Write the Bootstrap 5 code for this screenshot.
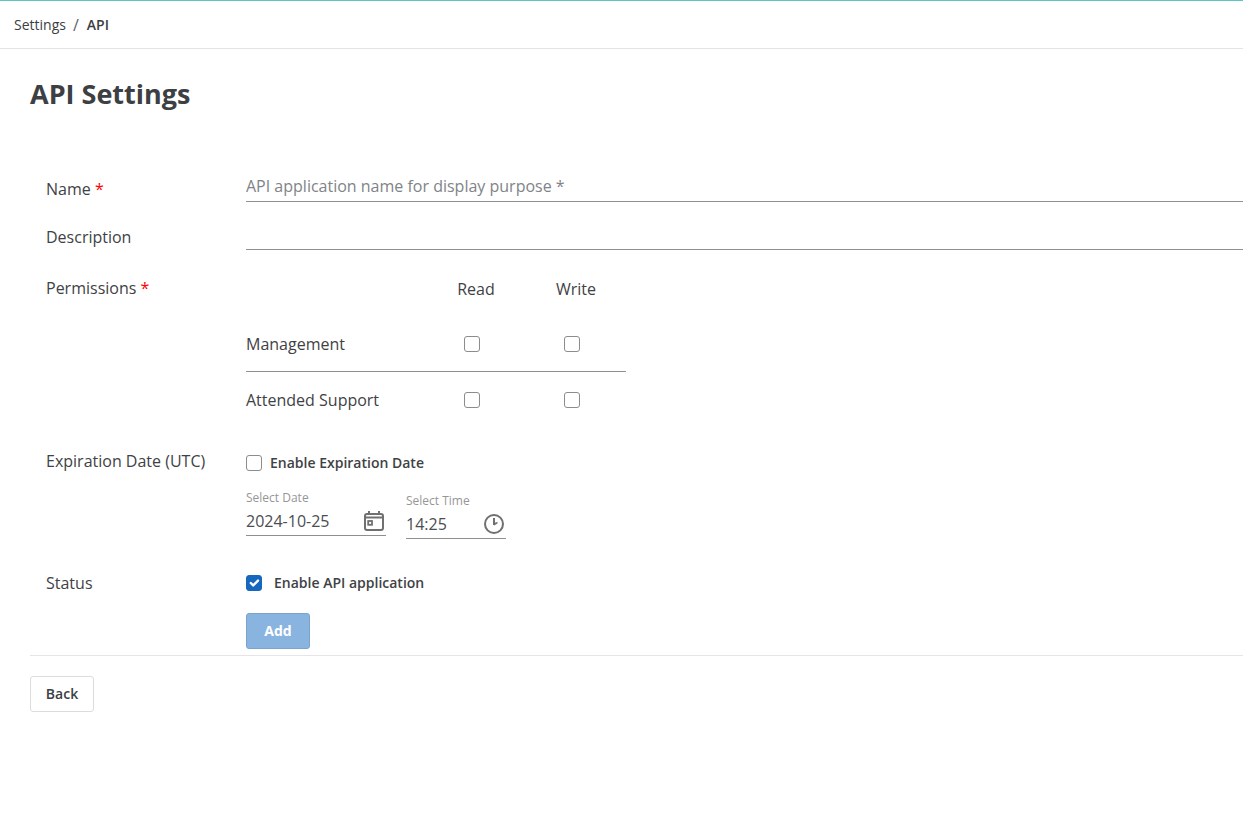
<!DOCTYPE html>
<html lang="en">
<head>
<meta charset="utf-8">
<meta name="viewport" content="width=device-width, initial-scale=1">
<title>API Settings</title>
<link href="https://cdn.jsdelivr.net/npm/bootstrap@5.3.0/dist/css/bootstrap.min.css" rel="stylesheet">
<script src="https://cdn.jsdelivr.net/npm/bootstrap@5.3.0/dist/js/bootstrap.bundle.min.js" defer></script>
<style>
  body { font-family: "Open Sans", sans-serif; font-size: 16px; line-height: 24px; color: #3f4245; }
  .topbar { height: 49px; padding: 0 14px; border-top: 1px solid #5bc4c4; border-bottom: 1px solid #e2e5e8; font-size: 14px; }
  .topbar a, .topbar .active { color: #3c4043; }
  .topbar .breadcrumb-item + .breadcrumb-item { padding-left: 7px; }
  .topbar .breadcrumb-item + .breadcrumb-item::before { color: #5f6368; font-size: 16px; font-weight: 400; padding-right: 8px; }
  .page-body { padding: 25px 0 0 30px; }
  .page-title { font-size: 27px; line-height: 40px; font-weight: 700; color: #3c4043; }
  .settings-form { padding: 40px 0 6px 16px; border-bottom: 1px solid #e5e5e5; }
  .form-line { display: grid; grid-template-columns: 200px minmax(0, 1fr); }
  .text-line { height: 48px; align-items: end; }
  .text-line label { padding-bottom: 1px; }
  .underlined { border: 0; border-bottom: 1px solid #8f8f8f; border-radius: 0; padding: 0; color: #3c4043; background: transparent; box-shadow: none; font-size: 16px; line-height: 24px; }
  .text-line .underlined { height: 32px; }
  .underlined::placeholder { color: #808488; font-weight: 400; }
  .required { color: #f00; }
  .perm-label { padding-top: 26px; }
  .permissions { width: 380px; table-layout: fixed; margin: 10px 0 0; border-collapse: separate; border-spacing: 0; }
  .permissions th { font-weight: 400; }
  .permissions th, .permissions td { height: 56px; padding: 0; vertical-align: middle; }
  .permissions thead th { padding-top: 2px; }
  .permissions .access { width: 100px; text-align: center; }
  .permissions .divided > * { border-bottom: 1px solid #8f8f8f; }
  .permissions .form-check-input { display: block; margin: 0 auto; position: static; float: none; }
  .permissions td.access { padding-right: 8px; }
  .form-check-input { width: 16px; height: 16px; margin: 0; border: 1px solid #8c8c8c; flex: none; }
  .form-check-input[type=checkbox] { border-radius: 3px; }
  .form-check-input:checked { background-color: #1668bd; border-color: #1668bd; }
  .form-check-input:checked[type=checkbox] { background-size: 16px 16px; background-position: center; }
  .check-label { font-size: 14px; line-height: 24px; font-weight: 600; }
  .expiration { padding-top: 21px; }
  .expire-check { padding-top: 2px; }
  .pickers { gap: 20px; padding-top: 14px; }
  .picker { border-bottom: 1px solid #8f8f8f; }
  .picker label { display: block; font-size: 12px; line-height: 16px; padding: 1px 0 3px; color: #969696; }
  .picker input { border: 0; padding: 0; width: 0; flex: 1; color: #4b4e51; background: none; outline: 0; line-height: 24px; height: 24px; }
  .picker button { border: 0; background: none; padding: 0; width: 24px; height: 24px; color: #707070; display: flex; }
  .date-picker { width: 140px; height: 47px; }
  .time-picker { width: 100px; height: 47px; margin-top: 3px; }
  .status { padding-top: 32px; }
  .status-check { gap: 12px; padding-bottom: 18px; }
  .btn-form { width: 64px; height: 36px; padding: 0 0 1px; font-size: 14px; line-height: 20px; font-weight: 600; border-radius: 3px; }
  .btn-add, .btn-add:disabled { background: #8ab4e0; border-color: #7ba4cd; color: #fff; opacity: 1; }
  .btn-back { border-color: #dcdcdc; color: #3c4043; background: #fff; margin-top: 20px; }
</style>
</head>
<body>
<nav class="topbar d-flex align-items-center" aria-label="breadcrumb">
  <ol class="breadcrumb mb-0">
    <li class="breadcrumb-item"><a href="#" class="text-decoration-none">Settings</a></li>
    <li class="breadcrumb-item active fw-semibold" aria-current="page">API</li>
  </ol>
</nav>

<main class="page-body">
  <h1 class="page-title mb-0">API Settings</h1>

  <form class="settings-form">
    <div class="form-line text-line">
      <label for="name">Name <span class="required">*</span></label>
      <input id="name" type="text" class="form-control underlined" placeholder="API application name for display purpose *">
    </div>
    <div class="form-line text-line">
      <label for="description">Description</label>
      <input id="description" type="text" class="form-control underlined">
    </div>

    <div class="form-line">
      <div class="perm-label">Permissions <span class="required">*</span></div>
      <table class="permissions">
        <thead>
          <tr><th></th><th class="access" scope="col">Read</th><th class="access" scope="col">Write</th></tr>
        </thead>
        <tbody>
          <tr class="divided">
            <th scope="row">Management</th>
            <td class="access"><input class="form-check-input" type="checkbox" aria-label="Management read"></td>
            <td class="access"><input class="form-check-input" type="checkbox" aria-label="Management write"></td>
          </tr>
          <tr>
            <th scope="row">Attended Support</th>
            <td class="access"><input class="form-check-input" type="checkbox" aria-label="Attended Support read"></td>
            <td class="access"><input class="form-check-input" type="checkbox" aria-label="Attended Support write"></td>
          </tr>
        </tbody>
      </table>
    </div>

    <div class="form-line expiration">
      <div>Expiration Date (UTC)</div>
      <div>
        <div class="d-flex align-items-center gap-2 expire-check">
          <input id="expire" class="form-check-input" type="checkbox">
          <label for="expire" class="check-label">Enable Expiration Date</label>
        </div>
        <div class="d-flex pickers">
          <div class="picker date-picker">
            <label for="date">Select Date</label>
            <div class="d-flex align-items-center">
              <input id="date" type="text" value="2024-10-25">
              <button type="button" aria-label="Open calendar">
                <svg width="24" height="24" viewBox="0 0 24 24" fill="none" stroke="currentColor" stroke-width="2"><rect x="3" y="5" width="18" height="16" rx="2"/><path d="M3 8.5h18M7 2v3M17 2v3"/><rect x="6.2" y="12" width="3.8" height="3.8" stroke-width="1.8"/></svg>
              </button>
            </div>
          </div>
          <div class="picker time-picker">
            <label for="time">Select Time</label>
            <div class="d-flex align-items-center">
              <input id="time" type="text" value="14:25">
              <button type="button" aria-label="Open clock">
                <svg width="24" height="24" viewBox="0 0 24 24" fill="none" stroke="currentColor"><circle cx="12" cy="12" r="9" stroke-width="2"/><path d="M12 6v7" stroke-width="2"/><path d="M12 13l3.5-2.5" stroke-width="1.5"/><path d="M12 11h3" stroke-width="1"/></svg>
              </button>
            </div>
          </div>
        </div>
      </div>
    </div>

    <div class="form-line status">
      <div>Status</div>
      <div>
        <div class="d-flex align-items-center status-check">
          <input id="enabled" class="form-check-input" type="checkbox" checked>
          <label for="enabled" class="check-label">Enable API application</label>
        </div>
        <button type="submit" class="btn btn-form btn-add fw-bold" disabled>Add</button>
      </div>
    </div>
  </form>

  <button type="button" class="btn btn-form btn-back">Back</button>
</main>
</body>
</html>
